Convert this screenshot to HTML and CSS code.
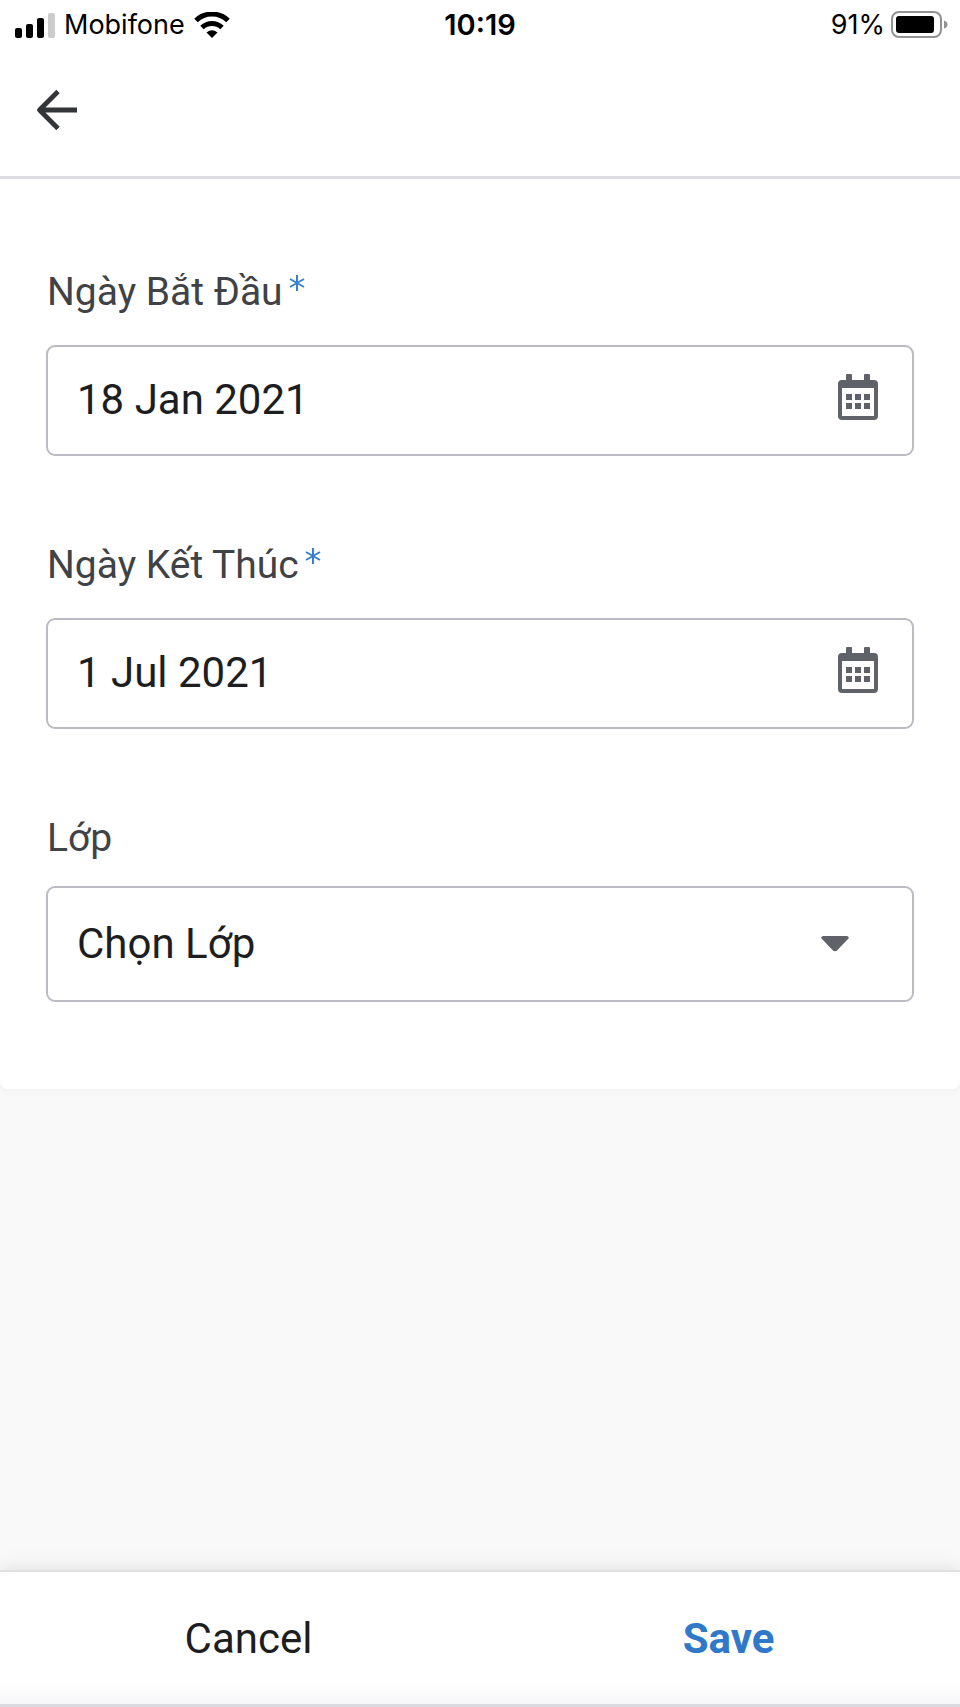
FILE: index.html
```html
<!DOCTYPE html>
<html lang="vi">
<head>
<meta charset="utf-8">
<meta name="viewport" content="width=device-width, initial-scale=1">
<title>Ngày Bắt Đầu</title>
<link rel="stylesheet" href="styles.css">
</head>
<body>
<div class="screen">
  <div class="status">
    <div class="status-left">
      <svg class="signal" width="40" height="26" viewBox="0 0 40 26" aria-hidden="true">
        <rect x="0" y="16" width="7" height="10" rx="2"/>
        <rect x="11" y="12" width="7" height="14" rx="2"/>
        <rect x="22" y="6" width="7" height="20" rx="2"/>
        <rect x="33" y="1" width="7" height="25" rx="2" fill="#ccc"/>
      </svg>
      <span>Mobifone</span>
      <svg class="wifi" width="36" height="26" viewBox="0 0 36 26" aria-hidden="true">
        <path d="M2 8.500A23 23 0 0 1 34 8.500M8 15.500A14.500 14.500 0 0 1 28 15.500" fill="none" stroke="#000" stroke-width="5"/>
        <path d="M18 26L12.500 20.500Q18 16 23.500 20.500Z"/>
      </svg>
    </div>
    <time class="clock">10:19</time>
    <div class="status-right">
      <span>91%</span>
      <svg width="57" height="28" viewBox="0 0 57 28" aria-hidden="true">
        <rect x="1" y="1" width="49" height="25" rx="7" fill="#fff" stroke="#929292" stroke-width="2"/>
        <rect x="5" y="5" width="38" height="17" rx="3"/>
        <path d="M53 9.500Q56.500 10.500 56.500 13.500T53 17.500Z" fill="#929292"/>
      </svg>
    </div>
  </div>

  <header class="header">
    <button class="back" type="button" aria-label="Back">
      <svg width="42" height="42" viewBox="0 0 42 42" aria-hidden="true">
        <path d="M22 2.500L3.500 21L22 39.500M3.500 21H41" fill="none" stroke="#333538" stroke-width="4.800" stroke-linejoin="round"/>
      </svg>
    </button>
  </header>

  <form class="form" id="filter">
    <div class="field">
      <label class="label" for="start">Ngày Bắt Đầu<svg class="required" width="16" height="18" viewBox="0 0 16 18" aria-hidden="true"><path d="M8 1V17M1 5L15 13M15 5L1 13"/></svg></label>
      <div class="box">
        <input class="input" id="start" type="text" value="18 Jan 2021">
        <button class="pick" type="button" aria-label="Chọn ngày bắt đầu">
          <svg width="42" height="48" viewBox="0 0 42 48" aria-hidden="true"><path fill-rule="evenodd" d="M5 7H9V2Q9 1 10 1H14Q15 1 15 2V7H27V2Q27 1 28 1H32Q33 1 33 2V7H37Q41 7 41 11V43Q41 47 37 47H5Q1 47 1 43V11Q1 7 5 7ZM5 15V43H37V15Z"/><path d="M9 21h6v6H9zM18 21h6v6h-6zM27 21h6v6h-6zM9 30h6v6H9zM18 30h6v6h-6zM27 30h6v6h-6z"/></svg>
        </button>
      </div>
    </div>
    <div class="field">
      <label class="label" for="end">Ngày Kết Thúc<svg class="required" width="16" height="18" viewBox="0 0 16 18" aria-hidden="true"><path d="M8 1V17M1 5L15 13M15 5L1 13"/></svg></label>
      <div class="box">
        <input class="input" id="end" type="text" value="1 Jul 2021">
        <button class="pick" type="button" aria-label="Chọn ngày kết thúc">
          <svg width="42" height="48" viewBox="0 0 42 48" aria-hidden="true"><path fill-rule="evenodd" d="M5 7H9V2Q9 1 10 1H14Q15 1 15 2V7H27V2Q27 1 28 1H32Q33 1 33 2V7H37Q41 7 41 11V43Q41 47 37 47H5Q1 47 1 43V11Q1 7 5 7ZM5 15V43H37V15Z"/><path d="M9 21h6v6H9zM18 21h6v6h-6zM27 21h6v6h-6zM9 30h6v6H9zM18 30h6v6h-6zM27 30h6v6h-6z"/></svg>
        </button>
      </div>
    </div>
    <div class="field field-select">
      <label class="label" for="class">Lớp</label>
      <div class="box box-select">
        <select class="input" id="class"><option>Chọn Lớp</option></select>
        <svg class="caret" width="28" height="16" viewBox="0 0 28 16" aria-hidden="true"><path d="M2 0H26Q29 1 27 3L16 14.500Q14 16 12 14.500L1 3Q-1 1 2 0Z"/></svg>
      </div>
    </div>
  </form>

  <footer class="footer">
    <button class="action" type="button">Cancel</button>
    <button class="action action-save" type="submit" form="filter">Save</button>
  </footer>
</div>
</body>
</html>
```

FILE: styles.css
```css
* {
  box-sizing: border-box;
}

body {
  margin: 0;
  background: #f9f9fa;
  color: #1d1e22;
  font-family: Roboto, "Noto Sans", sans-serif;
}

button,
input,
select {
  margin: 0;
  padding: 0;
  border: 0;
  background: none;
  color: inherit;
  font: inherit;
}

svg {
  display: block;
  flex: none;
}

.screen {
  display: flex;
  flex-direction: column;
  min-height: 100vh;
}

.status {
  display: grid;
  grid-template-columns: 1fr auto 1fr;
  align-items: center;
  height: 48px;
  padding: 2px 12px 0;
  background: #fff;
  color: #000;
  font: 27px/46px Inter, sans-serif;
}

.status-left,
.status-right {
  display: flex;
  align-items: center;
}

.status-left {
  gap: 9px;
  padding-left: 3px;
}

.status-right {
  justify-content: flex-end;
  gap: 6px;
}

.clock {
  font-size: 29px;
  font-weight: 600;
}

.header {
  display: flex;
  align-items: center;
  height: 131px;
  padding: 0 36px 4px;
  border-bottom: 3px solid #dddde3;
  background: #fff;
}

.form {
  display: flex;
  flex-direction: column;
  gap: 83px;
  padding: 87px 46px;
  border-radius: 0 0 8px 8px;
  background: #fff;
  box-shadow: 0 2px 8px rgba(0, 0, 0, 0.04);
}

.label {
  display: flex;
  align-items: flex-start;
  height: 52px;
  margin-bottom: 27px;
  padding-left: 1px;
  color: #3f4246;
  font-size: 39px;
  line-height: 52px;
}

.field-select .label {
  margin-bottom: 22px;
}

.required {
  margin: 8px 0 0 6px;
  fill: none;
  stroke: #3680ce;
  stroke-width: 2;
}

.box {
  display: flex;
  align-items: center;
  height: 111px;
  padding: 0 33px 0 29px;
  border: 2px solid #bbbcc3;
  border-radius: 9px;
}

.box-select {
  height: 116px;
  padding-right: 63px;
}

.input {
  flex: 1;
  min-width: 0;
  height: 100%;
  padding-bottom: 2px;
  font-size: 42px;
  appearance: none;
  outline: none;
}

.pick {
  padding-bottom: 8px;
  fill: #606269;
}

.caret {
  fill: #606269;
  pointer-events: none;
}

.footer {
  display: grid;
  grid-template-columns: 1fr 1fr;
  height: 137px;
  margin-top: auto;
  border-top: 2px solid #e0e0e1;
  border-bottom: 3px solid #dadae0;
  background: linear-gradient(to top, #f6f6f8, #fff 20px);
  box-shadow: 0 -2px 20px rgba(0, 0, 0, 0.1);
}

.action {
  padding-left: 17px;
  font-size: 42px;
}

.action-save {
  color: #3078c8;
  font-weight: 700;
}
```
